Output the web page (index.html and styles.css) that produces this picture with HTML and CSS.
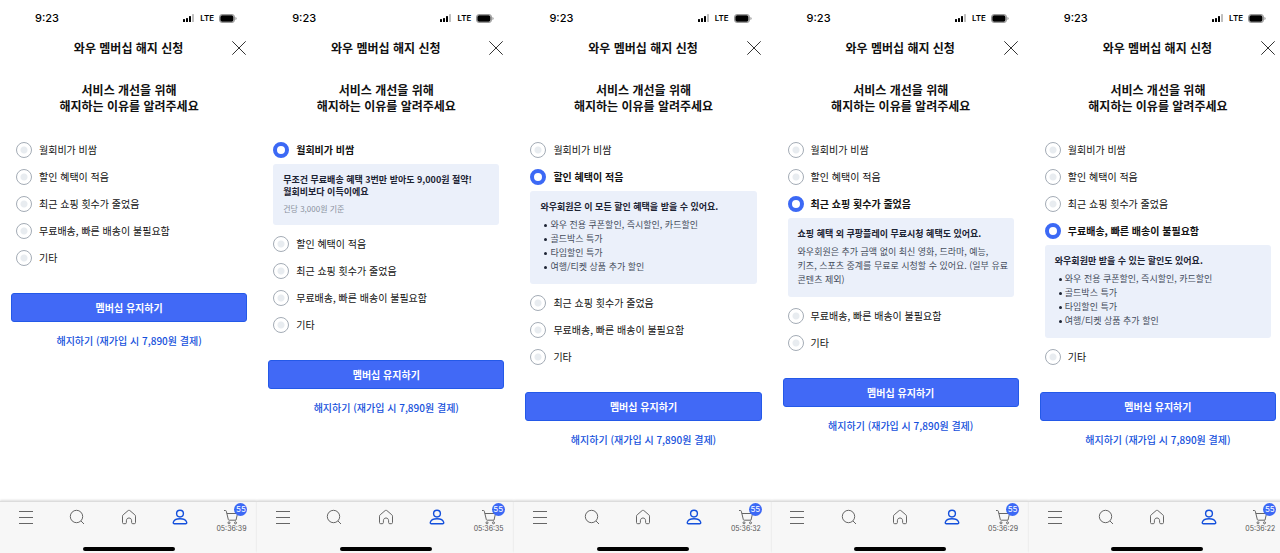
FILE: index.html
```html
<!DOCTYPE html>
<html lang="ko">
<head>
    <meta charset="UTF-8">
    <meta name="viewport" content="width=device-width, initial-scale=1.0">
    <title>와우 멤버십 해지 신청</title>
    <link rel="stylesheet" href="styles.css">
</head>
<body>
    <!-- Shared icons -->
    <svg class="icon-defs" aria-hidden="true">
        <symbol id="icon-status" viewBox="0 0 12 8">
            <rect x="0" y="5" width="2" height="3" rx="0.5"/>
            <rect x="3" y="4" width="2" height="4" rx="0.5"/>
            <rect x="6" y="2" width="2" height="6" rx="0.5"/>
            <rect x="9" y="0" width="2" height="8" rx="0.5" opacity="0.25"/>
        </symbol>
        <symbol id="icon-battery" viewBox="0 0 18 9">
            <rect x="0.5" y="0.5" width="15" height="8" rx="2.5" fill="none" stroke="#000" stroke-opacity="0.4"/>
            <rect x="1.3" y="1.3" width="13.2" height="6.4" rx="1.8"/>
            <path d="M16.5 3v3c.6-.3 1-.8 1-1.5s-.4-1.200-1-1.500z" opacity="0.5"/>
        </symbol>
        <symbol id="icon-close" viewBox="0 0 14 14">
            <path d="M0.300 0.300l13.400 13.400M13.700 0.300L0.300 13.700"/>
        </symbol>
        <symbol id="icon-menu" viewBox="0 0 16 16">
            <path d="M1 2.500h14M1 8.500h14M1 14.500h14"/>
        </symbol>
        <symbol id="icon-search" viewBox="0 0 16 16">
            <circle cx="7.500" cy="7.500" r="6.200"/>
            <path d="M12 12l3 3"/>
        </symbol>
        <symbol id="icon-home" viewBox="0 0 16 16">
            <path d="M1.500 7.200c0-.6.200-1 .7-1.400L7 1.700c.6-.5 1.400-.5 2 0l4.800 4.100c.5.400.7.800.7 1.400v6.300c0 .8-.4 1.200-1.200 1.200h-1.500c-.8 0-1.200-.4-1.200-1.200v-1.700C10.600 10 9.500 9 8 9s-2.600 1-2.600 2.800v1.700c0 .8-.4 1.200-1.200 1.200H2.700c-.8 0-1.200-.4-1.200-1.200z"/>
        </symbol>
        <symbol id="icon-user" viewBox="0 0 16 16">
            <circle cx="8" cy="4.600" r="3.400"/>
            <path d="M8 9.700c-3.500 0-6.200 1.400-6.700 3.700-.2.900.3 1.300 1 1.300h11.400c.7 0 1.200-.4 1-1.300-.5-2.300-3.200-3.700-6.700-3.700z"/>
        </symbol>
        <symbol id="icon-cart" viewBox="0 0 16 16">
            <path d="M1 1.500h1.500c.5 0 .7.200.8.700l2 8.300c.1.500.4.700.9.700h6.800l1.500-6.700H3.900"/>
            <circle cx="6" cy="13.800" r="1"/>
            <circle cx="12.500" cy="13.800" r="1"/>
        </symbol>
    </svg>

    <div class="screens">
        <!-- Screen 1: nothing selected -->
        <section class="phone">
            <div class="status-bar">
                <span class="time">9:23</span>
                <span class="signal"><svg class="bars"><use href="#icon-status"/></svg>LTE<svg class="battery"><use href="#icon-battery"/></svg></span>
            </div>
            <header class="header">
                <h1>와우 멤버십 해지 신청</h1>
                <button class="close" aria-label="닫기"><svg><use href="#icon-close"/></svg></button>
            </header>
            <form class="content">
                <h2>서비스 개선을 위해<br>해지하는 이유를 알려주세요</h2>
                <ul class="reasons">
                    <li><label><input type="radio" name="reason1">월회비가 비쌈</label></li>
                    <li><label><input type="radio" name="reason1">할인 혜택이 적음</label></li>
                    <li><label><input type="radio" name="reason1">최근 쇼핑 횟수가 줄었음</label></li>
                    <li><label><input type="radio" name="reason1">무료배송, 빠른 배송이 불필요함</label></li>
                    <li><label><input type="radio" name="reason1">기타</label></li>
                </ul>
                <button type="button" class="btn">멤버십 유지하기</button>
                <a class="leave" href="#">해지하기 (재가입 시 7,890원 결제)</a>
            </form>
            <nav class="tab-bar">
                <div class="tabs">
                    <a href="#" aria-label="메뉴"><svg><use href="#icon-menu"/></svg></a>
                    <a href="#" aria-label="검색"><svg><use href="#icon-search"/></svg></a>
                    <a href="#" aria-label="홈"><svg><use href="#icon-home"/></svg></a>
                    <a href="#" aria-label="마이쿠팡" class="active"><svg><use href="#icon-user"/></svg></a>
                    <a href="#" class="cart"><svg><use href="#icon-cart"/></svg><span class="badge">55</span><span class="timer">05:36:39</span></a>
                </div>
                <div class="home-bar"></div>
            </nav>
        </section>

        <!-- Screen 2: fee is too high -->
        <section class="phone">
            <div class="status-bar">
                <span class="time">9:23</span>
                <span class="signal"><svg class="bars"><use href="#icon-status"/></svg>LTE<svg class="battery"><use href="#icon-battery"/></svg></span>
            </div>
            <header class="header">
                <h1>와우 멤버십 해지 신청</h1>
                <button class="close" aria-label="닫기"><svg><use href="#icon-close"/></svg></button>
            </header>
            <form class="content">
                <h2>서비스 개선을 위해<br>해지하는 이유를 알려주세요</h2>
                <ul class="reasons">
                    <li>
                        <label><input type="radio" name="reason2" checked>월회비가 비쌈</label>
                        <div class="info">
                            <strong>무조건 무료배송 혜택 3번만 받아도 9,000원 절약!<br>월회비보다 이득이에요</strong>
                            <small>건당 3,000원 기준</small>
                        </div>
                    </li>
                    <li><label><input type="radio" name="reason2">할인 혜택이 적음</label></li>
                    <li><label><input type="radio" name="reason2">최근 쇼핑 횟수가 줄었음</label></li>
                    <li><label><input type="radio" name="reason2">무료배송, 빠른 배송이 불필요함</label></li>
                    <li><label><input type="radio" name="reason2">기타</label></li>
                </ul>
                <button type="button" class="btn">멤버십 유지하기</button>
                <a class="leave" href="#">해지하기 (재가입 시 7,890원 결제)</a>
            </form>
            <nav class="tab-bar">
                <div class="tabs">
                    <a href="#" aria-label="메뉴"><svg><use href="#icon-menu"/></svg></a>
                    <a href="#" aria-label="검색"><svg><use href="#icon-search"/></svg></a>
                    <a href="#" aria-label="홈"><svg><use href="#icon-home"/></svg></a>
                    <a href="#" aria-label="마이쿠팡" class="active"><svg><use href="#icon-user"/></svg></a>
                    <a href="#" class="cart"><svg><use href="#icon-cart"/></svg><span class="badge">55</span><span class="timer">05:36:35</span></a>
                </div>
                <div class="home-bar"></div>
            </nav>
        </section>

        <!-- Screen 3: not enough discounts -->
        <section class="phone">
            <div class="status-bar">
                <span class="time">9:23</span>
                <span class="signal"><svg class="bars"><use href="#icon-status"/></svg>LTE<svg class="battery"><use href="#icon-battery"/></svg></span>
            </div>
            <header class="header">
                <h1>와우 멤버십 해지 신청</h1>
                <button class="close" aria-label="닫기"><svg><use href="#icon-close"/></svg></button>
            </header>
            <form class="content">
                <h2>서비스 개선을 위해<br>해지하는 이유를 알려주세요</h2>
                <ul class="reasons">
                    <li><label><input type="radio" name="reason3">월회비가 비쌈</label></li>
                    <li>
                        <label><input type="radio" name="reason3" checked>할인 혜택이 적음</label>
                        <div class="info">
                            <strong>와우회원은 이 모든 할인 혜택을 받을 수 있어요.</strong>
                            <ul>
                                <li>와우 전용 쿠폰할인, 즉시할인, 카드할인</li>
                                <li>골드박스 특가</li>
                                <li>타임할인 특가</li>
                                <li>여행/티켓 상품 추가 할인</li>
                            </ul>
                        </div>
                    </li>
                    <li><label><input type="radio" name="reason3">최근 쇼핑 횟수가 줄었음</label></li>
                    <li><label><input type="radio" name="reason3">무료배송, 빠른 배송이 불필요함</label></li>
                    <li><label><input type="radio" name="reason3">기타</label></li>
                </ul>
                <button type="button" class="btn">멤버십 유지하기</button>
                <a class="leave" href="#">해지하기 (재가입 시 7,890원 결제)</a>
            </form>
            <nav class="tab-bar">
                <div class="tabs">
                    <a href="#" aria-label="메뉴"><svg><use href="#icon-menu"/></svg></a>
                    <a href="#" aria-label="검색"><svg><use href="#icon-search"/></svg></a>
                    <a href="#" aria-label="홈"><svg><use href="#icon-home"/></svg></a>
                    <a href="#" aria-label="마이쿠팡" class="active"><svg><use href="#icon-user"/></svg></a>
                    <a href="#" class="cart"><svg><use href="#icon-cart"/></svg><span class="badge">55</span><span class="timer">05:36:32</span></a>
                </div>
                <div class="home-bar"></div>
            </nav>
        </section>

        <!-- Screen 4: shopping less often -->
        <section class="phone">
            <div class="status-bar">
                <span class="time">9:23</span>
                <span class="signal"><svg class="bars"><use href="#icon-status"/></svg>LTE<svg class="battery"><use href="#icon-battery"/></svg></span>
            </div>
            <header class="header">
                <h1>와우 멤버십 해지 신청</h1>
                <button class="close" aria-label="닫기"><svg><use href="#icon-close"/></svg></button>
            </header>
            <form class="content">
                <h2>서비스 개선을 위해<br>해지하는 이유를 알려주세요</h2>
                <ul class="reasons">
                    <li><label><input type="radio" name="reason4">월회비가 비쌈</label></li>
                    <li><label><input type="radio" name="reason4">할인 혜택이 적음</label></li>
                    <li>
                        <label><input type="radio" name="reason4" checked>최근 쇼핑 횟수가 줄었음</label>
                        <div class="info">
                            <strong>쇼핑 혜택 외 쿠팡플레이 무료시청 혜택도 있어요.</strong>
                            <p>와우회원은 추가 금액 없이 최신 영화, 드라마, 예능,<br>키즈, 스포츠 중계를 무료로 시청할 수 있어요. (일부 유료<br>콘텐츠 제외)</p>
                        </div>
                    </li>
                    <li><label><input type="radio" name="reason4">무료배송, 빠른 배송이 불필요함</label></li>
                    <li><label><input type="radio" name="reason4">기타</label></li>
                </ul>
                <button type="button" class="btn">멤버십 유지하기</button>
                <a class="leave" href="#">해지하기 (재가입 시 7,890원 결제)</a>
            </form>
            <nav class="tab-bar">
                <div class="tabs">
                    <a href="#" aria-label="메뉴"><svg><use href="#icon-menu"/></svg></a>
                    <a href="#" aria-label="검색"><svg><use href="#icon-search"/></svg></a>
                    <a href="#" aria-label="홈"><svg><use href="#icon-home"/></svg></a>
                    <a href="#" aria-label="마이쿠팡" class="active"><svg><use href="#icon-user"/></svg></a>
                    <a href="#" class="cart"><svg><use href="#icon-cart"/></svg><span class="badge">55</span><span class="timer">05:36:29</span></a>
                </div>
                <div class="home-bar"></div>
            </nav>
        </section>

        <!-- Screen 5: free delivery not needed -->
        <section class="phone">
            <div class="status-bar">
                <span class="time">9:23</span>
                <span class="signal"><svg class="bars"><use href="#icon-status"/></svg>LTE<svg class="battery"><use href="#icon-battery"/></svg></span>
            </div>
            <header class="header">
                <h1>와우 멤버십 해지 신청</h1>
                <button class="close" aria-label="닫기"><svg><use href="#icon-close"/></svg></button>
            </header>
            <form class="content">
                <h2>서비스 개선을 위해<br>해지하는 이유를 알려주세요</h2>
                <ul class="reasons">
                    <li><label><input type="radio" name="reason5">월회비가 비쌈</label></li>
                    <li><label><input type="radio" name="reason5">할인 혜택이 적음</label></li>
                    <li><label><input type="radio" name="reason5">최근 쇼핑 횟수가 줄었음</label></li>
                    <li>
                        <label><input type="radio" name="reason5" checked>무료배송, 빠른 배송이 불필요함</label>
                        <div class="info">
                            <strong>와우회원만 받을 수 있는 할인도 있어요.</strong>
                            <ul>
                                <li>와우 전용 쿠폰할인, 즉시할인, 카드할인</li>
                                <li>골드박스 특가</li>
                                <li>타임할인 특가</li>
                                <li>여행/티켓 상품 추가 할인</li>
                            </ul>
                        </div>
                    </li>
                    <li><label><input type="radio" name="reason5">기타</label></li>
                </ul>
                <button type="button" class="btn">멤버십 유지하기</button>
                <a class="leave" href="#">해지하기 (재가입 시 7,890원 결제)</a>
            </form>
            <nav class="tab-bar">
                <div class="tabs">
                    <a href="#" aria-label="메뉴"><svg><use href="#icon-menu"/></svg></a>
                    <a href="#" aria-label="검색"><svg><use href="#icon-search"/></svg></a>
                    <a href="#" aria-label="홈"><svg><use href="#icon-home"/></svg></a>
                    <a href="#" aria-label="마이쿠팡" class="active"><svg><use href="#icon-user"/></svg></a>
                    <a href="#" class="cart"><svg><use href="#icon-cart"/></svg><span class="badge">55</span><span class="timer">05:36:22</span></a>
                </div>
                <div class="home-bar"></div>
            </nav>
        </section>
    </div>
</body>
</html>
```
FILE: styles.css
```css
/* Base Styles */
* {
    margin: 0;
    padding: 0;
    box-sizing: border-box;
}

body {
    background: #fff;
    color: #111;
    font-family: 'Noto Sans CJK KR', sans-serif;
    font-size: 10px;
    overflow-x: hidden;
}

button {
    border: none;
    background: none;
    font-family: inherit;
    cursor: pointer;
}

a {
    text-decoration: none;
}

ul {
    list-style: none;
}

.icon-defs {
    display: none;
}

/* Screens */
.screens {
    display: grid;
    grid-template-columns: repeat(5, 1fr);
    min-height: 100vh;
    margin-right: -6px;
}

.phone {
    display: flex;
    flex-direction: column;
    min-width: 0;
}

/* Status Bar */
.status-bar {
    display: flex;
    justify-content: space-between;
    align-items: center;
    height: 36px;
    padding: 0 20px 0 35px;
    font-family: 'Inter', sans-serif;
    color: #000;
}

.time {
    font-size: 11px;
    font-weight: 500;
}

.signal {
    display: flex;
    align-items: center;
    gap: 5px;
    font-size: 8px;
    font-weight: 600;
}

.bars {
    width: 12px;
    height: 8px;
}

.battery {
    width: 18px;
    height: 9px;
}

/* Header */
.header {
    display: grid;
    grid-template-columns: 1fr auto 1fr;
    align-items: center;
    height: 24px;
    padding: 0 11px;
}

.header h1 {
    grid-column: 2;
    font-size: 12px;
    line-height: 16px;
    font-weight: 600;
}

.close {
    justify-self: end;
    height: 14px;
}

.close svg {
    display: block;
    width: 14px;
    height: 14px;
    stroke: #333;
    fill: none;
}

/* Content */
.content {
    flex: 1;
    display: flex;
    flex-direction: column;
    padding: 22px 10px 20px 11px;
}

.content h2 {
    font-size: 12px;
    line-height: 16px;
    font-weight: 600;
    text-align: center;
}

.reasons {
    display: flex;
    flex-direction: column;
    gap: 11px;
    margin: 28px 5px 27px;
}

.reasons label {
    display: flex;
    align-items: center;
    gap: 7px;
    line-height: 16px;
}

.reasons label:has(input:checked) {
    font-weight: 700;
}

.reasons input {
    appearance: none;
    width: 16px;
    height: 16px;
    border: 1px solid #a4acb6;
    border-radius: 50%;
    background: radial-gradient(circle, #e8ecf0 3px, #fff 4px);
}

.reasons input:checked {
    border: 4px solid #3c69f5;
    background: #fff;
}

/* Info Box */
.info {
    margin: 6px 0 0;
    padding: 10px 4px 10px 10px;
    border-radius: 3px;
    background: #ebf0fa;
    color: #444c5a;
    font-size: 9px;
    line-height: 14px;
}

.info strong {
    display: block;
    margin-bottom: 5px;
    line-height: 12px;
    color: #1c2333;
}

.info small {
    display: block;
    font-size: 8px;
    line-height: 12px;
    color: #8a919d;
}

.info ul li {
    display: flex;
    align-items: center;
    gap: 3px;
    padding-left: 4px;
}

.info ul li::before {
    content: "";
    width: 3px;
    height: 3px;
    border-radius: 50%;
    background: #1c2333;
}

/* Buttons */
.btn {
    height: 29px;
    border: 1px solid #2459e8;
    border-radius: 3px;
    background: #4169f6;
    color: #fff;
    font-size: 10px;
    font-weight: 600;
}

.leave {
    align-self: center;
    margin-top: 11px;
    line-height: 16px;
    font-weight: 500;
    color: #1450dc;
}

/* Tab Bar */
.tab-bar {
    display: flex;
    flex-direction: column;
    align-items: center;
    justify-content: space-between;
    height: 52px;
    padding: 7px 0 2px;
    border-top: 1px solid #dcdcdc;
    background: #f7f7f7;
    box-shadow: 0 -1px 2px #ddd;
}

.tabs {
    display: grid;
    grid-template-columns: repeat(5, 1fr);
    width: 100%;
}

.tabs a {
    display: flex;
    flex-direction: column;
    align-items: center;
    position: relative;
    color: #666;
}

.tabs svg {
    width: 16px;
    height: 16px;
    fill: none;
    stroke: currentColor;
    stroke-linejoin: round;
}

.tabs .active {
    color: #1450dc;
}

.tabs .active svg {
    stroke-width: 1.4;
}

.badge {
    position: absolute;
    top: -6px;
    left: 50%;
    margin-left: 3px;
    width: 13px;
    height: 13px;
    border-radius: 50%;
    background: #3c69f5;
    color: #fff;
    font-family: 'Inter', sans-serif;
    font-size: 8px;
    line-height: 13px;
    text-align: center;
}

.timer {
    font-family: 'Inter', sans-serif;
    font-size: 7px;
    line-height: 8px;
    color: #555;
}

.home-bar {
    width: 92px;
    height: 4px;
    border-radius: 2px;
    background: #000;
}
```
